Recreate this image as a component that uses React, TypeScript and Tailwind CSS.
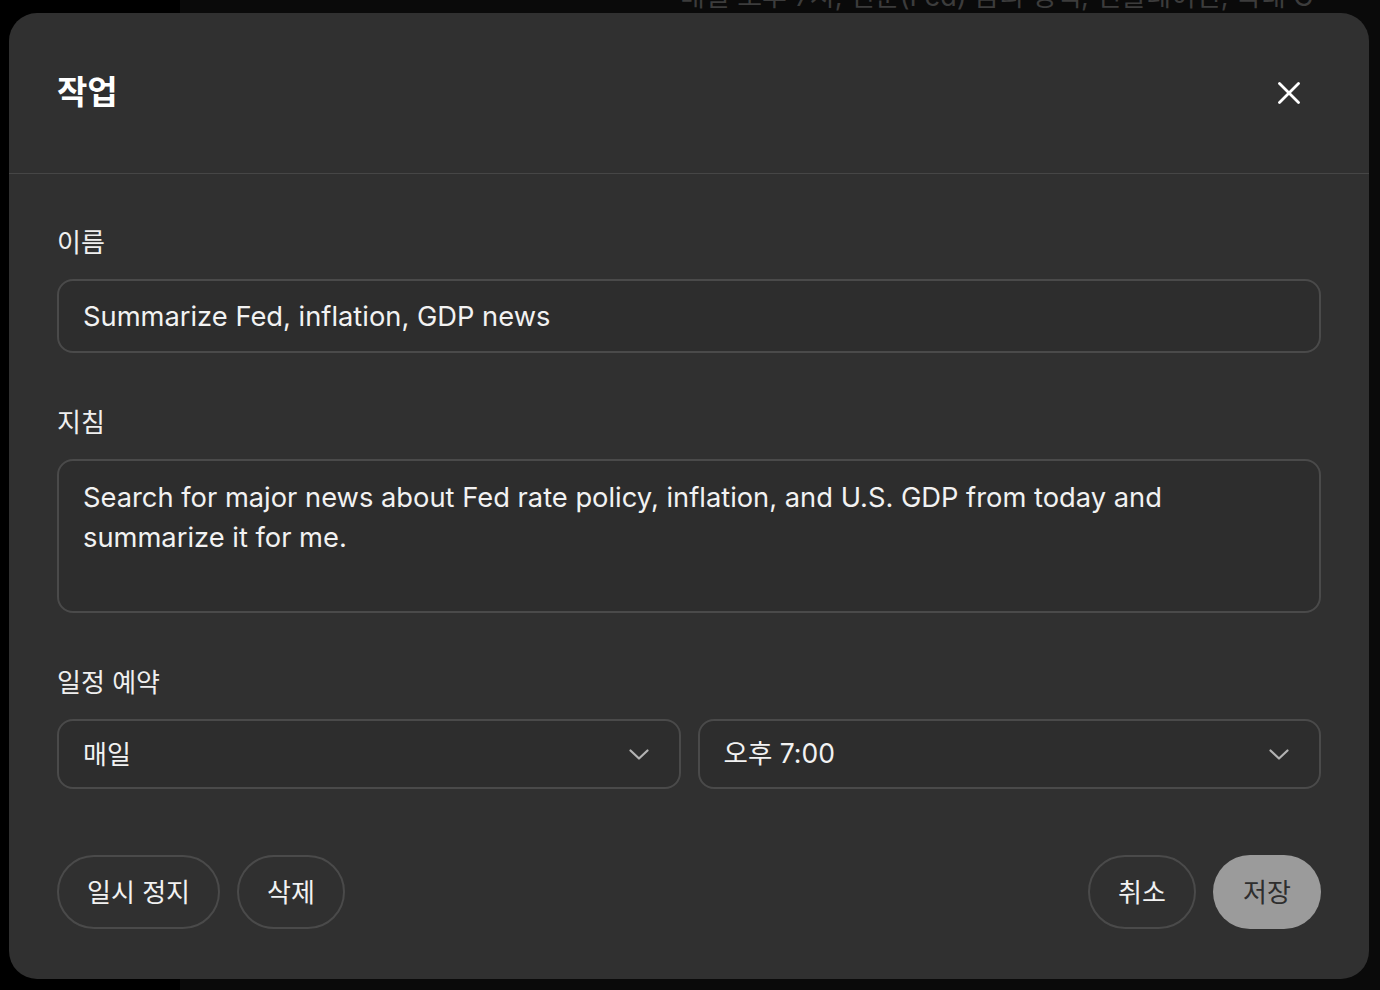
import React from "react";

const Chevron = () => (
  <svg width="20" height="11" viewBox="0 0 20 11" fill="none">
    <polyline points="1.5,1.5 10,9.5 18.5,1.5" stroke="#b3b3b3" strokeWidth="2.2" strokeLinecap="round" strokeLinejoin="round" />
  </svg>
);

const CloseIcon = () => (
  <svg width="22" height="22" viewBox="0 0 22 22" fill="none">
    <line x1="1.5" y1="1.5" x2="20.5" y2="20.5" stroke="#ffffff" strokeWidth="2.8" strokeLinecap="round" />
    <line x1="20.5" y1="1.5" x2="1.5" y2="20.5" stroke="#ffffff" strokeWidth="2.8" strokeLinecap="round" />
  </svg>
);

export default function App() {
  const font = { fontFamily: 'Inter, "Noto Sans CJK KR", "Noto Sans", sans-serif' };
  return (
    <div className="relative w-full h-[990px] bg-[#0a0a0a] overflow-hidden" style={font}>
      <div className="absolute left-0 top-0 w-[180px] h-full bg-black" />
      <div className="absolute left-[680px] top-[-19px] text-[27px] leading-[32px] whitespace-nowrap text-[#3c3c3c]">
        매일 오후 7시, 연준(Fed) 금리 정책, 인플레이션, 국내 G
      </div>
      <div className="absolute left-[9px] top-[13px] w-[1360px] h-[966px] rounded-[28px] bg-[#303030] flex flex-col">
        <div className="h-[161px] flex items-center justify-between pl-12 pr-[69px] border-b border-[#464646]">
          <h1 className="text-[33px] font-bold text-white">작업</h1>
          <button className="flex items-center justify-center">
            <CloseIcon />
          </button>
        </div>
        <div className="flex flex-col px-12 pt-[53px]">
          <label className="text-[26px] leading-[32px] text-[#efefef]">이름</label>
          <div className="mt-[20px] h-[74px] rounded-[16px] border-2 border-[#4a4a4a] bg-[#2d2d2d] flex items-center px-[24px] text-[27.3px] text-[#f2f2f2]">
            <span className="pt-[2px]">Summarize Fed, inflation, GDP news</span>
          </div>
          <label className="mt-[54px] text-[26px] leading-[32px] text-[#efefef]">지침</label>
          <div className="mt-[20px] h-[154px] rounded-[16px] border-2 border-[#4a4a4a] bg-[#2d2d2d] px-[24px] pt-[17px] text-[27.3px] leading-[40px] text-[#f2f2f2]">
            Search for major news about Fed rate policy, inflation, and U.S. GDP from today and
            <br />
            summarize it for me.
          </div>
          <label className="mt-[54px] text-[26px] leading-[32px] text-[#efefef]">일정 예약</label>
          <div className="mt-[20px] grid grid-cols-2 gap-[17px]">
            <div className="h-[70px] rounded-[16px] border-2 border-[#4a4a4a] bg-[#2d2d2d] flex items-center justify-between pl-[24px] pr-[30px] text-[26px] text-[#f2f2f2]">
              <span>매일</span>
              <Chevron />
            </div>
            <div className="h-[70px] rounded-[16px] border-2 border-[#4a4a4a] bg-[#2d2d2d] flex items-center justify-between pl-[24px] pr-[30px] text-[26.5px] text-[#f2f2f2]">
              <span>오후 7:00</span>
              <Chevron />
            </div>
          </div>
          <div className="mt-[66px] flex items-center justify-between">
            <div className="flex gap-[17px]">
              <button className="h-[74px] w-[163px] rounded-full border-2 border-[#4a4a4a] text-[26px] text-[#f2f2f2]">일시 정지</button>
              <button className="h-[74px] w-[108px] rounded-full border-2 border-[#4a4a4a] text-[26px] text-[#f2f2f2]">삭제</button>
            </div>
            <div className="flex gap-[17px]">
              <button className="h-[74px] w-[108px] rounded-full border-2 border-[#4a4a4a] text-[26px] text-[#f2f2f2]">취소</button>
              <button className="h-[74px] w-[108px] rounded-full bg-[#9b9b9b] text-[26px] text-[#2e2e2e]">저장</button>
            </div>
          </div>
        </div>
      </div>
    </div>
  );
}
